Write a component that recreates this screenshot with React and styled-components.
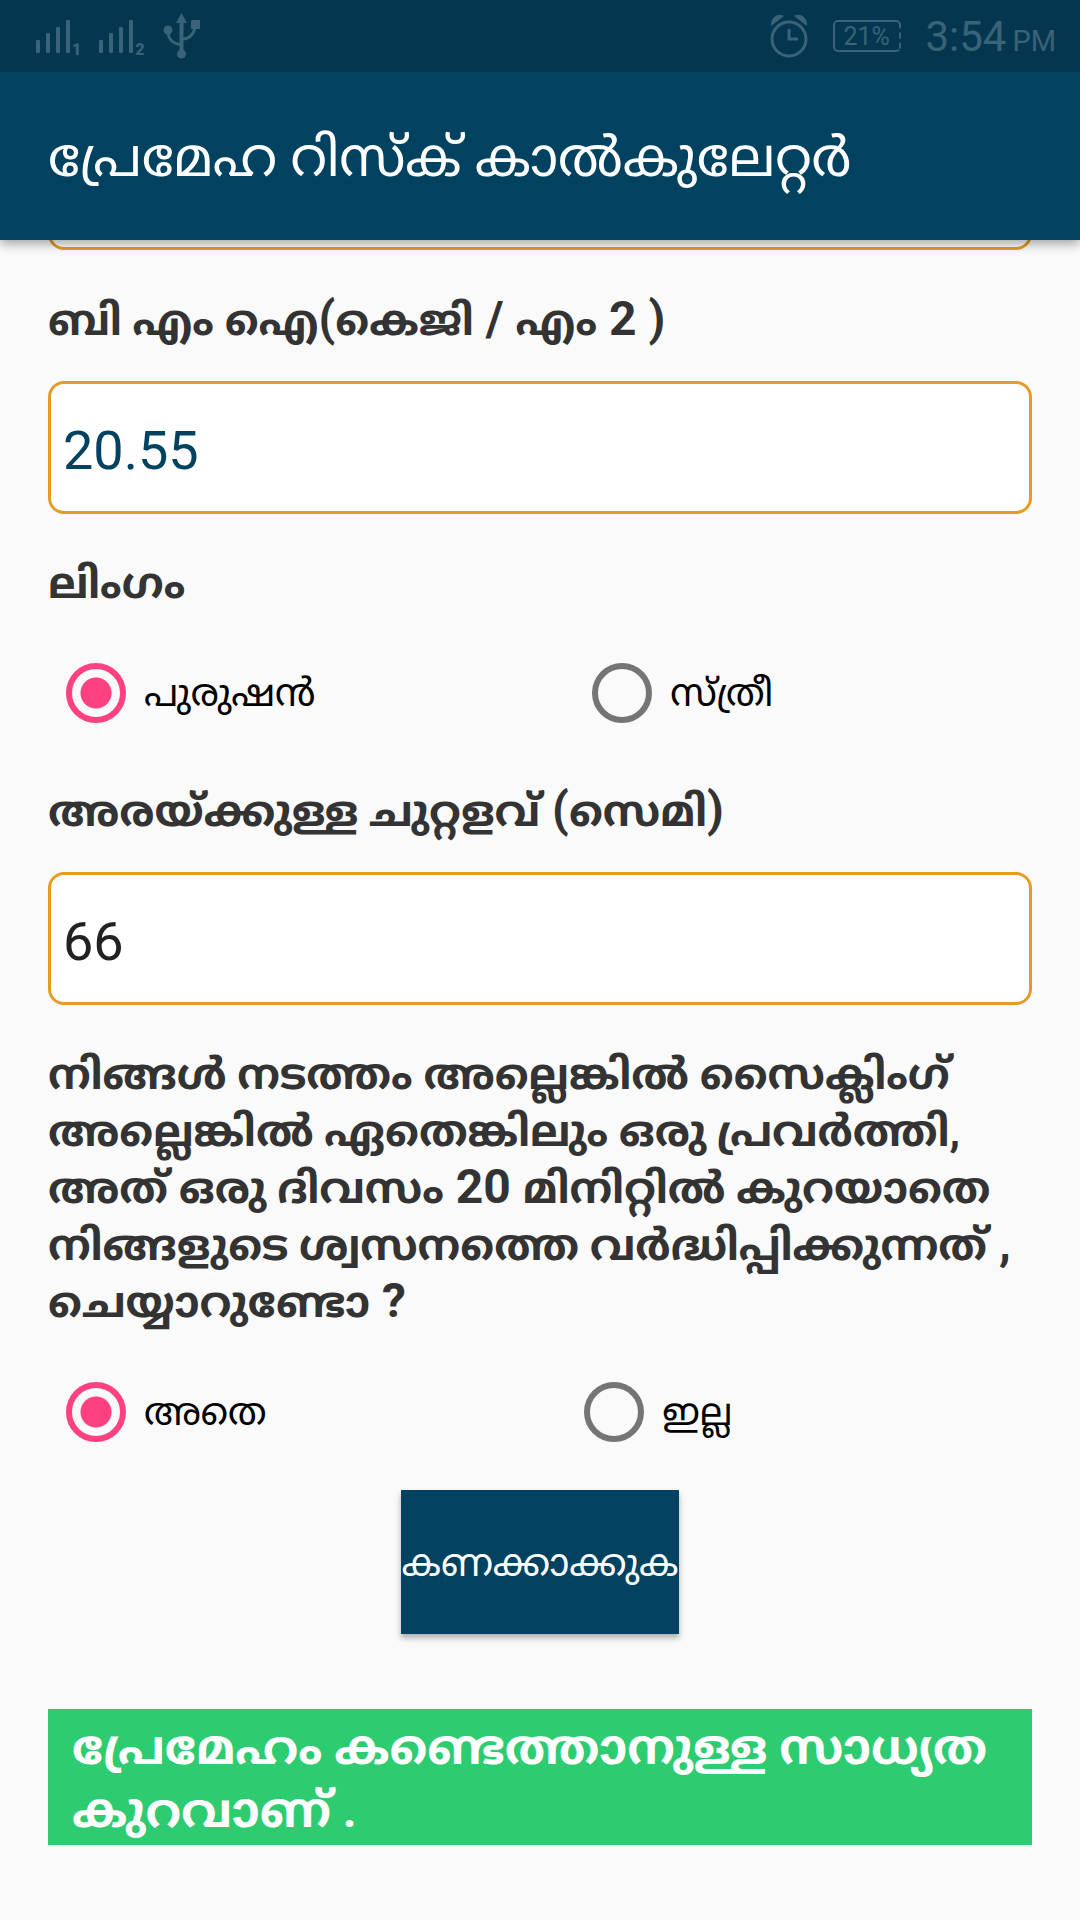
import React, { useState } from 'react';
import styled, { createGlobalStyle } from 'styled-components';


const App = () => {
  const [weight, setWeight] = useState('');
  const [bmi, setBmi] = useState('20.55');
  const [waist, setWaist] = useState('66');
  const [gender, setGender] = useState('male');
  const [active, setActive] = useState('yes');

  return (
    <Screen>
        <GlobalStyle />
        <TopBar>
            <StatusBar>
                <StatusGroup>
                    <SignalIcon sim="1" />
                    <SignalIcon sim="2" />
                    <UsbIcon />
                </StatusGroup>
                <StatusGroup $end>
                    <AlarmIcon />
                    <Battery>21%</Battery>
                    <Clock>3:54<small>PM</small></Clock>
                </StatusGroup>
            </StatusBar>
            <Title>പ്രേമേഹ റിസ്ക് കാൽകുലേറ്റർ</Title>
        </TopBar>

        <Scroller>
            <Form onSubmit={(e) => e.preventDefault()}>
                <Field aria-label="ഭാരം" value={weight} onChange={(e) => setWeight(e.target.value)} />

                <Label htmlFor="bmi">ബി എം ഐ<Latin>(</Latin>കെജി<Latin> / </Latin>എം<Latin> 2 )</Latin></Label>
                <Field id="bmi" $blue value={bmi} onChange={(e) => setBmi(e.target.value)} />

                <Group>
                    <Legend>ലിംഗം</Legend>
                    <Options>
                        <Option>
                            <Radio name="gender" checked={gender === 'male'} onChange={() => setGender('male')} />
                            പുരുഷൻ
                        </Option>
                        <Option>
                            <Radio name="gender" checked={gender === 'female'} onChange={() => setGender('female')} />
                            സ്ത്രീ
                        </Option>
                    </Options>
                </Group>

                <Label htmlFor="waist">അരയ്ക്കുള്ള ചുറ്റളവ്<Latin> (</Latin>സെമി<Latin>)</Latin></Label>
                <Field id="waist" value={waist} onChange={(e) => setWaist(e.target.value)} />

                <Group>
                    <Legend>
                        നിങ്ങൾ നടത്തം അല്ലെങ്കിൽ സൈക്ലിംഗ് അല്ലെങ്കിൽ ഏതെങ്കിലും ഒരു പ്രവർത്തി, അത് ഒരു ദിവസം<Latin> 20 </Latin>മിനിറ്റിൽ കുറയാതെ നിങ്ങളുടെ ശ്വസനത്തെ വർദ്ധിപ്പിക്കുന്നത്<Latin> , </Latin>ചെയ്യാറുണ്ടോ<Latin> ?</Latin>
                    </Legend>
                    <Options>
                        <Option>
                            <Radio name="active" checked={active === 'yes'} onChange={() => setActive('yes')} />
                            അതെ
                        </Option>
                        <Option>
                            <Radio name="active" checked={active === 'no'} onChange={() => setActive('no')} />
                            ഇല്ല
                        </Option>
                    </Options>
                </Group>

                <Submit type="submit">കണക്കാക്കുക</Submit>
                <Result>പ്രേമേഹം കണ്ടെത്താനുള്ള സാധ്യത കുറവാണ് .</Result>
            </Form>
        </Scroller>
    </Screen>
  )
}

export default App;

const SignalIcon = ({ sim }) => (
    <Signal>
        <svg width="36" height="34" viewBox="0 0 36 34" fill="currentColor" aria-hidden="true">
            <rect x="0" y="21" width="4" height="13" rx="1" />
            <rect x="10" y="14" width="4" height="20" rx="1" />
            <rect x="20" y="8" width="4" height="26" rx="1" />
            <rect x="30" y="1" width="4" height="33" rx="1" />
        </svg>
        <Sim>{sim}</Sim>
    </Signal>
)

const UsbIcon = () => (
    <svg width="38" height="46" viewBox="0 0 38 46" fill="none" stroke="currentColor" strokeWidth="3" aria-hidden="true">
        <path d="M18.500 8V38" strokeWidth="4" />
        <path d="M5 18c0 8 5 13 13 13.500M32 12c0 8-5 14-13 14" />
        <path d="M18.500 0L24 10H13z" fill="currentColor" stroke="none" />
        <circle cx="5" cy="17" r="4.500" fill="currentColor" stroke="none" />
        <rect x="28" y="7" width="9" height="9" rx="1" fill="currentColor" stroke="none" />
        <circle cx="18.500" cy="41" r="4.500" fill="currentColor" stroke="none" />
    </svg>
)

const AlarmIcon = () => (
    <svg width="40" height="44" viewBox="0 0 40 44" fill="none" stroke="currentColor" strokeWidth="3" aria-hidden="true">
        <circle cx="20" cy="25" r="17" />
        <path d="M20 15v10h9" />
        <path d="M2 12C1 5 8-2 15 2z" fill="currentColor" stroke="none" />
        <path d="M38 12C39 5 32-2 25 2z" fill="currentColor" stroke="none" />
    </svg>
)

const GlobalStyle = createGlobalStyle`
    body {
        margin: 0;
        background: #fafafa;
        font-family: Roboto, 'Noto Sans Malayalam', 'Noto Sans', sans-serif;
    }

    *, *::before, *::after {
        box-sizing: border-box;
    }
`

const Screen = styled.div`
    min-height: 100vh;
    background: #fafafa;
`

const TopBar = styled.header`
    position: relative;
    z-index: 1;
    background: #004260;
    box-shadow: 0 4px 10px rgba(0, 0, 0, 0.35);
`

const StatusBar = styled.div`
    height: 72px;
    padding: 0 24px 0 36px;
    display: flex;
    align-items: center;
    justify-content: space-between;
    background: #04374f;
    color: #396378;
`

const StatusGroup = styled.div`
    display: flex;
    align-items: center;
    gap: ${({ $end }) => ($end ? '24px' : '18px')};
`

const Signal = styled.span`
    display: flex;
    align-items: flex-end;
`

const Sim = styled.span`
    font-size: 16px;
    font-weight: 900;
    line-height: 6px;
`

const Battery = styled.span`
    width: 68px;
    height: 32px;
    border: 2px solid;
    border-right-style: dashed;
    border-radius: 5px;
    font-size: 25px;
    line-height: 30px;
    padding-left: 8px;
`

const Clock = styled.time`
    padding-top: 6px;
    font-size: 42px;
    line-height: 48px;

    small {
        margin-left: 6px;
        font-size: 29px;
    }
`

const Title = styled.h1`
    height: 168px;
    margin: 0;
    padding: 10px 48px 0;
    display: flex;
    align-items: center;
    color: #fff;
    font-size: 54px;
    font-weight: normal;
    white-space: nowrap;
`

const Scroller = styled.main`
    overflow: hidden;
`

const Form = styled.form`
    margin-top: -123px;
    padding: 0 48px 72px;
    display: flex;
    flex-direction: column;
`

const Label = styled.label`
    margin: 42px 0 32px;
    color: #333;
    font-size: 43px;
    font-weight: bold;
    line-height: 57px;
`

/* latin digits and marks are set a size up, next to the taller malayalam letters */
const Latin = styled.span`
    font-size: 48px;
    line-height: 1;
`

const Field = styled.input`
    width: 100%;
    height: 133px;
    padding: 6px 12px 0;
    border: 3px solid #e69c24;
    border-radius: 16px;
    background: #fff;
    color: ${({ $blue }) => ($blue ? '#004260' : '#222')};
    font-family: inherit;
    font-size: 54px;
    outline: none;
`

const Group = styled.fieldset`
    min-width: 0;
    margin: 41px 0 0;
    padding: 0;
    border: 0;
`

const Legend = styled.legend`
    padding: 0;
    color: #333;
    font-size: 43px;
    font-weight: bold;
    line-height: 57px;
`

const Options = styled.div`
    margin-top: 33px;
    display: flex;
`

const Option = styled.label`
    height: 96px;
    padding-left: 18px;
    flex: 1 1 auto;
    display: flex;
    align-items: center;
    gap: 18px;
    font-size: 38px;
    line-height: 48px;
`

const Radio = styled.input.attrs({ type: 'radio' })`
    appearance: none;
    width: 60px;
    height: 60px;
    margin: 0;
    border: 6px solid #757575;
    border-radius: 50%;

    &:checked {
        border-color: #ff4081;
        background: radial-gradient(circle, #ff4081 15px, transparent 16px);
    }
`

const Submit = styled.button`
    align-self: center;
    height: 144px;
    margin-top: 30px;
    padding: 8px 0 0;
    border: 0;
    background: #004260;
    color: #fff;
    font-family: inherit;
    font-size: 38px;
    box-shadow: 0 4px 6px rgba(0, 0, 0, 0.3);
`

const Result = styled.output`
    margin-top: 75px;
    padding: 7px 24px 3px;
    background: #2ecc71;
    color: #fff;
    font-size: 48px;
    font-weight: bold;
    line-height: 63px;
`
